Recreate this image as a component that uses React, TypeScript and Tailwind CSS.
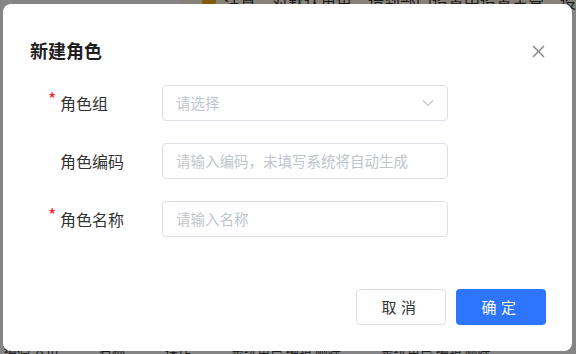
import React from "react";

const font = { fontFamily: '"Noto Sans CJK SC", "Noto Sans", sans-serif' };

function Field({ label, required, placeholder, select }: { label: string; required?: boolean; placeholder: string; select?: boolean }) {
  return (
    <div className="flex h-[36px] items-center">
      <div className="flex w-[115px] items-center">
        <span className={`-mt-[10px] w-[13px] pl-[1px] text-[18px] leading-none text-[#f5222d] ${required ? "" : "invisible"}`}>*</span>
        <span className="text-[16px] text-[#333]">{label}</span>
      </div>
      <div className="flex h-[36px] w-[286px] items-center justify-between rounded-[4px] border border-[#dcdfe6] pl-[13px] pr-[13px]">
        <span className="text-[14.5px] text-[#c0c4cc]">{placeholder}</span>
        {select && (
          <svg width="12" height="8" viewBox="0 0 12 8" fill="none" stroke="#c0c4cc" strokeWidth="1.1">
            <path d="M1 1.5 L6 6.5 L11 1.5" />
          </svg>
        )}
      </div>
    </div>
  );
}

export default function App() {
  return (
    <div className="relative h-[354px] w-[576px] overflow-hidden bg-white" style={font}>
      {/* page behind the dialog */}
      <div className="flex h-[10px]">
        <div className="w-[191px]"></div>
        <div className="-mt-[8px] flex flex-1 items-center gap-2 bg-[#fffbe6] pl-[22px] text-[16px] text-[#333]">
          <span className="h-[14px] w-[14px] rounded-full bg-[#faad14]"></span>
          <span className="whitespace-nowrap">注意：对默认角色，请到部门设置中设置主管，设</span>
        </div>
      </div>
      <div className="mt-[330px] flex gap-10 whitespace-nowrap pl-[4px] text-[13px] text-[#333]">
        <span>编码 人员</span>
        <span>名称</span>
        <span>操作</span>
        <span>系统角色 编辑 删除</span>
        <span>系统角色 编辑 删除</span>
      </div>
      <div className="absolute inset-0 bg-black/[0.48]"></div>

      {/* dialog */}
      <div className="absolute left-[3px] top-[4px] flex h-[347px] w-[569px] flex-col rounded-[8px] bg-white">
        <div className="flex items-center justify-between pl-[27px] pr-[27px] pt-[34px]">
          <h2 className="text-[18px] font-bold leading-[24px] text-[#1f1f1f]">新建角色</h2>
          <svg width="13" height="13" viewBox="0 0 13 13" stroke="#8a8a8a" strokeWidth="1.5" className="mt-[2px]">
            <path d="M1 1 L12 12 M12 1 L1 12" />
          </svg>
        </div>
        <div className="mt-[23px] flex flex-col gap-[22px] pl-[44px]">
          <Field label="角色组" required placeholder="请选择" select />
          <Field label="角色编码" placeholder="请输入编码，未填写系统将自动生成" />
          <Field label="角色名称" required placeholder="请输入名称" />
        </div>
        <div className="mt-[52px] flex justify-end gap-[10px] pr-[26px]">
          <button className="h-[36px] w-[90px] rounded-[4px] border border-[#dcdfe6] bg-white text-[15px] tracking-[0.3em] text-[#333]">取消</button>
          <button className="h-[36px] w-[90px] rounded-[4px] bg-[#2d74ff] text-[15px] tracking-[0.3em] text-white">确定</button>
        </div>
      </div>
    </div>
  );
}
